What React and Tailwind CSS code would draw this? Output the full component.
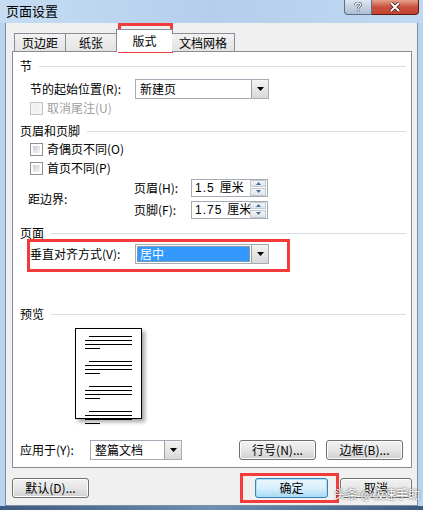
import React from 'react'

// 页面设置 dialog, Win7 look
const font = { fontFamily: '"Noto Sans CJK SC", "Liberation Sans", sans-serif' }

function Section({ title, className = '' }) {
  return (
    <div className={'flex items-center h-4 pl-[7px] pr-[5px] ' + className}>
      <span>{title}</span>
      <div className="ml-[7px] flex-1 h-px bg-[#d5dfe5]" />
    </div>
  )
}

function Check({ label, disabled }) {
  return (
    <div className={'flex items-center h-[14px] pl-[17px] ' + (disabled ? 'text-[#a0a0a0]' : '')}>
      <div
        className={
          'w-[13px] h-[13px] border p-[2px] ' +
          (disabled ? 'border-[#c4c4c4] bg-[#f4f4f4]' : 'border-[#8e8f8f] bg-white')
        }
      >
        <div className={'w-full h-full ' + (disabled ? 'bg-[#f0f0f0]' : 'bg-gradient-to-br from-[#cbcfd5] to-[#f6f6f6]')} />
      </div>
      <span className="ml-[4px]">{label}</span>
    </div>
  )
}

function Arrow() {
  return (
    <div className="w-[17px] h-full border-l border-[#a0a0a0] bg-gradient-to-b from-[#f3f3f3] to-[#d9d9d9] flex items-center justify-center">
      <svg width="7" height="4" viewBox="0 0 7 4"><path d="M0 0h7L3.5 4z" fill="#000" /></svg>
    </div>
  )
}

function Select({ value, w, selected }) {
  return (
    <div className={'flex h-5 border border-[#a5acb5] bg-white ' + w}>
      <div className="flex-1 flex items-center p-[1px]">
        {selected ? (
          <div className="w-full h-full bg-[#3399ff] text-white flex items-center pl-[2px] border border-dotted border-[#c9a36a]">{value}</div>
        ) : (
          <span className="pl-[3px]">{value}</span>
        )}
      </div>
      <Arrow />
    </div>
  )
}

function Spin({ value }) {
  return (
    <div className="flex items-center h-[18px] w-[77px] border border-[#a5acb5] bg-white overflow-hidden">
      <span className="flex-1 pl-[3px] whitespace-nowrap overflow-hidden">
        <span className="tracking-[1px]" style={{ fontFamily: '"Liberation Sans", sans-serif' }}>{value}</span>
        <span className="ml-[5px]">厘米</span>
      </span>
      <div className="w-[16px] h-[16px] mr-[1px] flex flex-col gap-px shrink-0">
        <div className="flex-1 border border-[#c3c9d1] bg-gradient-to-b from-[#f4f6f8] to-[#dde3ea] flex items-center justify-center">
          <svg width="5" height="3" viewBox="0 0 5 3"><path d="M0 3h5L2.5 0z" fill="#4a6a9a" /></svg>
        </div>
        <div className="flex-1 border border-[#c3c9d1] bg-gradient-to-b from-[#f4f6f8] to-[#dde3ea] flex items-center justify-center">
          <svg width="5" height="3" viewBox="0 0 5 3"><path d="M0 0h5L2.5 3z" fill="#4a6a9a" /></svg>
        </div>
      </div>
    </div>
  )
}

function Btn({ children, w, focus }) {
  return (
    <div
      className={
        'h-5 rounded-[3px] border flex items-center justify-center ' + w + ' ' +
        (focus
          ? 'border-[#3c7fb1] bg-gradient-to-b from-[#eaf6fd] via-[#d9f0fc] to-[#a7d9f5] shadow-[inset_0_0_0_1px_#a6e1f8]'
          : 'border-[#707070] bg-gradient-to-b from-[#f2f2f2] via-[#e6e6e6] to-[#cfcfcf] shadow-[inset_0_0_0_1px_#fcfcfc]')
      }
    >
      {children}
    </div>
  )
}

function PreviewPage() {
  const groups = [0, 1, 2, 3]
  return (
    <div className="ml-[62px] w-[67px] h-[91px] border-[1.5px] border-black bg-white pt-[7px] pl-[9px] pr-[9px] shadow-[3px_3px_4px_rgba(0,0,0,0.35)] flex flex-col gap-[12px]">
      {groups.map(g => (
        <div key={g} className="flex flex-col gap-[3px]">
          <div className="ml-[4px] h-px bg-black" />
          <div className="h-px bg-black" />
          <div className="h-px bg-black" />
          <div className="w-[15px] h-px bg-black" />
        </div>
      ))}
    </div>
  )
}

export default function App() {
  return (
    <div className="relative w-[423px] h-[510px] overflow-hidden text-[12px] text-black bg-[#b9d4ef]" style={font}>
      {/* title bar */}
      <div className="h-[23px] flex bg-gradient-to-r from-[#c5dcf3] via-[#b4cfec] to-[#c0d8f1]">
        <div className="pl-[6px] pt-[1px] text-[13px]">页面设置</div>
        <div className="ml-auto mr-[4px] flex h-[15px]">
          <div className="w-[28px] rounded-bl-[4px] border border-t-0 border-[#5c6f88] bg-gradient-to-b from-[#dfe7f0] to-[#aebdd0] flex items-center justify-center">
            <svg width="8" height="10" viewBox="0 0 8 10">
              <path d="M1.5 3.2C1.5 1.8 2.6 1 4 1s2.5.8 2.5 2.1c0 1.4-2.3 1.6-2.3 3.3M4.2 8v1.2" fill="none" stroke="#2a3d5a" strokeWidth="2.6" />
              <path d="M1.5 3.2C1.5 1.8 2.6 1 4 1s2.5.8 2.5 2.1c0 1.4-2.3 1.6-2.3 3.3M4.2 8v1.2" fill="none" stroke="#fff" strokeWidth="1.3" />
            </svg>
          </div>
          <div className="w-[47px] rounded-br-[4px] border border-t-0 border-l-0 border-[#5a1b14] bg-gradient-to-b from-[#e6a18e] via-[#c9503d] to-[#c24232] flex items-center justify-center">
            <svg width="12" height="10" viewBox="0 0 12 10"><path d="M2 1l8 8M10 1L2 9" stroke="#3b1410" strokeWidth="3.4" /><path d="M2 1l8 8M10 1L2 9" stroke="#fff" strokeWidth="2" /></svg>
          </div>
        </div>
      </div>

      {/* client */}
      <div className="ml-[5px] mr-[5px] h-[483px] border-x border-b border-[#7d8ea3] bg-[#f0f0f0] pl-[6px] pr-[5px]">
        {/* tabs */}
        <div className="flex items-end h-[28px] pl-[2px] relative z-10">
          <div className="w-[52px] h-[18px] border border-b-0 border-[#898c95] bg-gradient-to-b from-[#f2f2f2] to-[#e3e3e3] flex items-center justify-center">页边距</div>
          <div className="w-[51px] h-[18px] border border-b-0 border-l-0 border-[#898c95] bg-gradient-to-b from-[#f2f2f2] to-[#e3e3e3] flex items-center justify-center">纸张</div>
          <div className="w-[57px] h-[23px] mb-[-1px] border border-b-0 border-[#898c95] bg-white flex items-center justify-center -mx-[1px]">版式</div>
          <div className="w-[63px] h-[18px] border border-b-0 border-l-0 border-[#898c95] bg-gradient-to-b from-[#f2f2f2] to-[#e3e3e3] flex items-center justify-center">文档网格</div>
        </div>

        {/* panel */}
        <div className="h-[417px] border border-[#898c95] bg-white flex flex-col">
          <Section title="节" className="mt-[6px]" />
          <div className="mt-[5px] flex items-center h-5 pl-[17px]">
            <span className="w-[105px]">节的起始位置(R):</span>
            <Select value="新建页" w="w-[134px]" />
          </div>
          <div className="mt-[2px]"><Check label="取消尾注(U)" disabled /></div>

          <Section title="页眉和页脚" className="mt-[8px]" />
          <div className="mt-[3px]"><Check label="奇偶页不同(O)" /></div>
          <div className="mt-[5px]"><Check label="首页不同(P)" /></div>
          <div className="mt-[3px] flex items-center h-[41px] pl-[15px]">
            <span className="w-[106px]">距边界:</span>
            <div className="flex flex-col gap-[4px]">
              <div className="flex items-center">
                <span className="w-[57px]">页眉(H):</span>
                <Spin value="1.5" />
              </div>
              <div className="flex items-center">
                <span className="w-[57px]">页脚(F):</span>
                <Spin value="1.75" />
              </div>
            </div>
          </div>

          <Section title="页面" className="mt-[6px]" />
          <div className="mt-[3px] flex items-center h-5 pl-[17px]">
            <span className="w-[105px]">垂直对齐方式(V):</span>
            <Select value="居中" w="w-[134px]" selected />
          </div>

          <Section title="预览" className="mt-[42px]" />
          <div className="mt-[6px]"><PreviewPage /></div>

          <div className="mt-[21px] flex items-center h-5 pl-[7px] pr-[8px]">
            <span className="w-[70px]">应用于(Y):</span>
            <Select value="整篇文档" w="w-[92px]" />
            <div className="ml-auto flex gap-[10px]">
              <Btn w="w-[77px]">行号(N)...</Btn>
              <Btn w="w-[77px]">边框(B)...</Btn>
            </div>
          </div>
        </div>

        {/* footer buttons */}
        <div className="mt-[10px] flex items-center">
          <Btn w="w-[77px]">默认(D)...</Btn>
          <div className="ml-auto flex gap-[12px]">
            <Btn w="w-[73px]" focus>确定</Btn>
            <Btn w="w-[72px]">取消</Btn>
          </div>
        </div>
      </div>
      <div className="h-[4px] bg-gradient-to-r from-[#3d5a7e] via-[#6f8fb5] to-[#3d5a7e]" />

      {/* annotations */}
      <div className="absolute left-[118px] top-[23px] w-[55px] h-[30px] border-[3px] border-[#f23b3b]" />
      <div className="absolute left-[27px] top-[239px] w-[263px] h-[33px] border-[3px] border-[#f23b3b]" />
      <div className="absolute left-[240px] top-[473px] w-[99px] h-[30px] border-[3px] border-[#f23b3b]" />
      <div className="absolute left-[334px] top-[485px] text-white text-[12px] [text-shadow:0_0_2px_rgba(0,0,0,0.8)]">头条 @极速手助</div>
    </div>
  )
}
